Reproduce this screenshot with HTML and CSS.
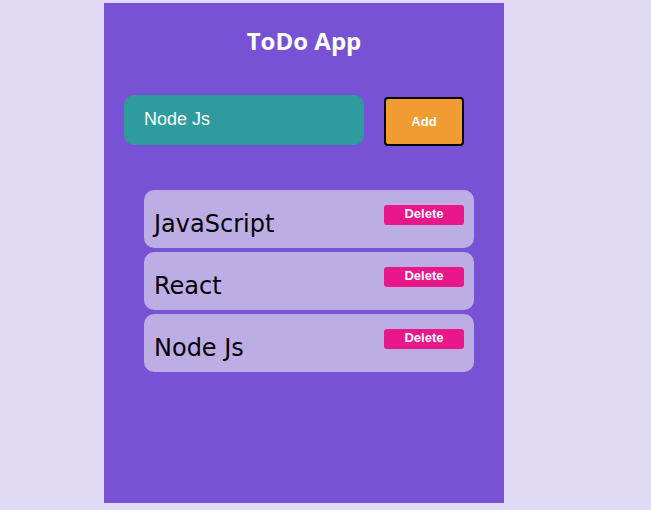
FILE: index.html
```html
<!DOCTYPE html>
<html lang="en">
<head>
<meta charset="utf-8">
<title>ToDo App</title>
<link rel="stylesheet" href="styles.css">
</head>
<body>
<div class="app">
  <h1 class="title">ToDo App</h1>
  <div class="form">
    <input class="todo-input" type="text" value="Node Js">
    <button class="add-btn">Add</button>
  </div>
  <ul class="list">
    <li class="item"><span class="item-text">JavaScript</span><button class="del-btn">Delete</button></li>
    <li class="item"><span class="item-text">React</span><button class="del-btn">Delete</button></li>
    <li class="item"><span class="item-text">Node Js</span><button class="del-btn">Delete</button></li>
  </ul>
</div>
</body>
</html>
```
FILE: styles.css
```css
html, body {
  margin: 0;
  padding: 0;
  background: #e2d9f6;
}
body {
  font-family: "Liberation Sans", Arial, sans-serif;
}
.app {
  box-sizing: border-box;
  width: 400px;
  height: 500px;
  margin: 3px 0 0 104px;
  padding-top: 22px;
  background: #7752d5;
}
.title {
  margin: 0;
  text-align: center;
  font-family: "Open Sans", sans-serif;
  font-weight: 700;
  font-size: 24px;
  line-height: 32px;
  color: #ffffff;
}
.form {
  display: flex;
  align-items: flex-start;
  gap: 20px;
  margin-top: 38px;
  padding-left: 20px;
}
.todo-input {
  box-sizing: border-box;
  width: 240px;
  height: 50px;
  margin: 0;
  padding: 0 0 1px 20px;
  border: none;
  border-radius: 10px;
  background: #2e9c9e;
  color: #ffffff;
  font-family: "Liberation Sans", Arial, sans-serif;
  font-size: 18px;
  outline: none;
}
.add-btn {
  box-sizing: border-box;
  width: 80px;
  height: 49px;
  margin: 2px 0 0 0;
  padding: 0;
  border: 2px solid #000000;
  border-radius: 4px;
  background: #f09c33;
  color: #ffffff;
  font-family: "Liberation Sans", Arial, sans-serif;
  font-weight: 700;
  font-size: 13px;
}
.list {
  list-style: none;
  width: 330px;
  margin: 44px 0 0 40px;
  padding: 0;
  display: flex;
  flex-direction: column;
  gap: 4px;
}
.item {
  box-sizing: border-box;
  height: 58px;
  padding: 15px 10px 0 10px;
  display: flex;
  justify-content: space-between;
  align-items: flex-start;
  background: #bcaee4;
  border-radius: 10px;
}
.item-text {
  margin-top: 5px;
  font-family: "DejaVu Sans", sans-serif;
  font-size: 24px;
  line-height: 28px;
  color: #000000;
}
.del-btn {
  box-sizing: border-box;
  width: 80px;
  height: 20px;
  margin: 0;
  padding: 0 0 2px 0;
  border: none;
  border-radius: 3px;
  background: #e8178a;
  color: #ffffff;
  font-family: "Liberation Sans", Arial, sans-serif;
  font-weight: 700;
  font-size: 13px;
  line-height: 18px;
}
```
